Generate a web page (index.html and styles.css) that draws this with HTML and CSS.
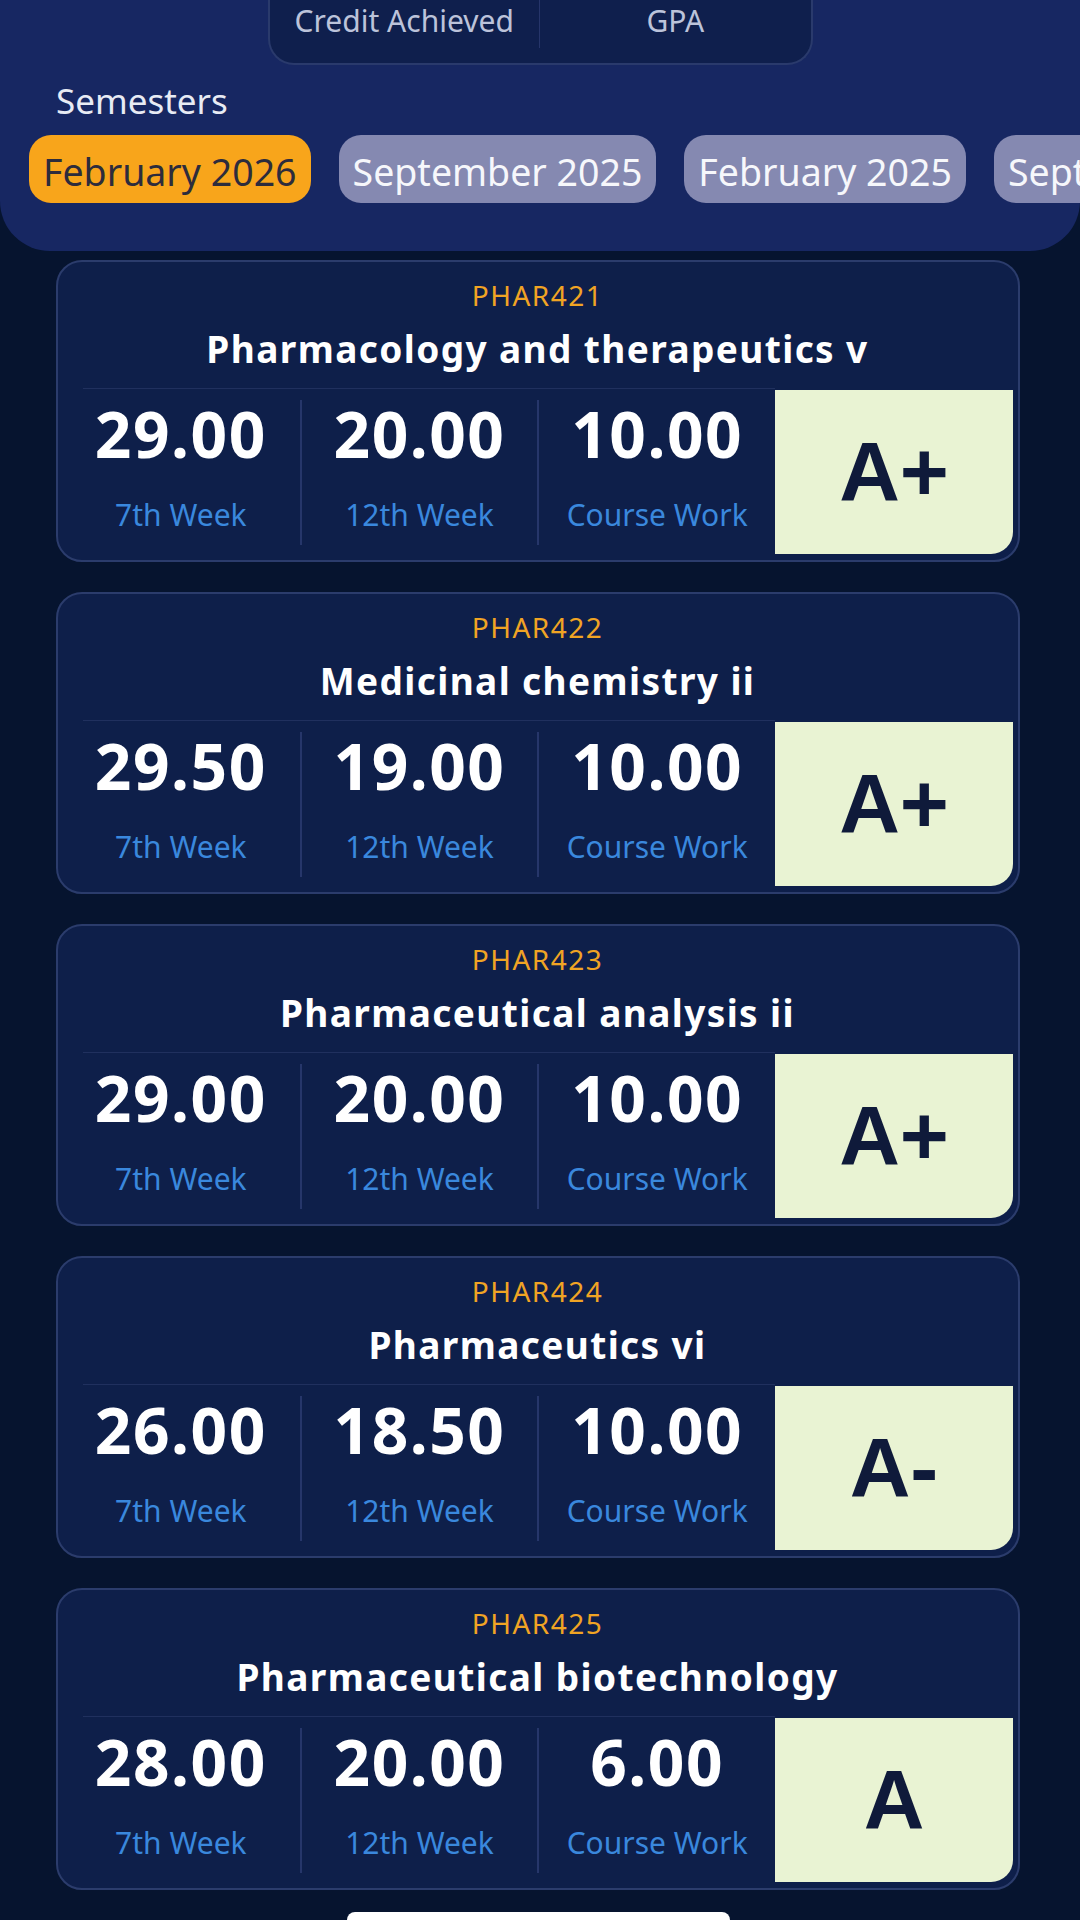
FILE: index.html
```html
<!DOCTYPE html>
<html lang="en">
<head>
    <meta charset="UTF-8">
    <meta name="viewport" content="width=device-width, initial-scale=1.0">
    <title>Grades</title>
    <link rel="stylesheet" href="styles.css">
</head>
<body>
    <!-- Summary + Semester Picker -->
    <header class="top-panel">
        <div class="summary">
            <div class="summary-cell">Credit Achieved</div>
            <div class="summary-cell">GPA</div>
        </div>

        <div class="semesters-label">Semesters</div>

        <div class="chips">
            <div class="chip active">February 2026</div>
            <div class="chip">September 2025</div>
            <div class="chip">February 2025</div>
            <div class="chip">September 2024</div>
        </div>
    </header>

    <!-- Course Cards -->
    <main class="courses">
        <div class="card">
            <div class="card-code">PHAR421</div>
            <div class="card-title">Pharmacology and therapeutics v</div>
            <div class="card-body">
                <div class="marks">
                    <div class="mark"><span class="mark-value">29.00</span><span class="mark-label">7th Week</span></div>
                    <div class="mark"><span class="mark-value">20.00</span><span class="mark-label">12th Week</span></div>
                    <div class="mark"><span class="mark-value">10.00</span><span class="mark-label">Course Work</span></div>
                </div>
                <div class="grade">A+</div>
            </div>
        </div>

        <div class="card">
            <div class="card-code">PHAR422</div>
            <div class="card-title">Medicinal chemistry ii</div>
            <div class="card-body">
                <div class="marks">
                    <div class="mark"><span class="mark-value">29.50</span><span class="mark-label">7th Week</span></div>
                    <div class="mark"><span class="mark-value">19.00</span><span class="mark-label">12th Week</span></div>
                    <div class="mark"><span class="mark-value">10.00</span><span class="mark-label">Course Work</span></div>
                </div>
                <div class="grade">A+</div>
            </div>
        </div>

        <div class="card">
            <div class="card-code">PHAR423</div>
            <div class="card-title">Pharmaceutical analysis ii</div>
            <div class="card-body">
                <div class="marks">
                    <div class="mark"><span class="mark-value">29.00</span><span class="mark-label">7th Week</span></div>
                    <div class="mark"><span class="mark-value">20.00</span><span class="mark-label">12th Week</span></div>
                    <div class="mark"><span class="mark-value">10.00</span><span class="mark-label">Course Work</span></div>
                </div>
                <div class="grade">A+</div>
            </div>
        </div>

        <div class="card">
            <div class="card-code">PHAR424</div>
            <div class="card-title">Pharmaceutics vi</div>
            <div class="card-body">
                <div class="marks">
                    <div class="mark"><span class="mark-value">26.00</span><span class="mark-label">7th Week</span></div>
                    <div class="mark"><span class="mark-value">18.50</span><span class="mark-label">12th Week</span></div>
                    <div class="mark"><span class="mark-value">10.00</span><span class="mark-label">Course Work</span></div>
                </div>
                <div class="grade">A-</div>
            </div>
        </div>

        <div class="card">
            <div class="card-code">PHAR425</div>
            <div class="card-title">Pharmaceutical biotechnology</div>
            <div class="card-body">
                <div class="marks">
                    <div class="mark"><span class="mark-value">28.00</span><span class="mark-label">7th Week</span></div>
                    <div class="mark"><span class="mark-value">20.00</span><span class="mark-label">12th Week</span></div>
                    <div class="mark"><span class="mark-value">6.00</span><span class="mark-label">Course Work</span></div>
                </div>
                <div class="grade">A</div>
            </div>
        </div>
    </main>

    <!-- Home Indicator -->
    <div class="home-bar"></div>
</body>
</html>
```

FILE: styles.css
```css
/* Universal Settings */
body {
    margin: 0;
    width: 1080px;
    height: 1920px;
    overflow: hidden;
    background: #06142f;
    color: #ffffff;
    font-family: 'Noto Sans', 'Open Sans', sans-serif;
}

/* Top Panel */
.top-panel {
    background: #172762;
    border-radius: 0 0 50px 50px;
    padding-bottom: 48px;
}

/* Summary Box */
.summary {
    width: 545px;
    margin: 0 auto;
    display: grid;
    grid-template-columns: 1fr 1fr;
    background: #0f1f4d;
    border: 2px solid #2a3a6c;
    border-top: none;
    border-radius: 0 0 26px 26px;
    padding-bottom: 15px;
    box-sizing: border-box;
}

.summary-cell {
    height: 48px;
    line-height: 42px;
    font-size: 30px;
    color: #bcc3da;
    text-align: center;
}

.summary-cell:first-child {
    border-right: 1px solid #26356a;
}

/* Semester Label */
.semesters-label {
    margin-top: 16px;
    padding-left: 56px;
    font-size: 35px;
    line-height: 40px;
    color: #e8ebf4;
}

/* Semester Chips */
.chips {
    display: flex;
    gap: 28px;
    margin-top: 14px;
    padding-left: 29px;
    overflow: hidden;
    white-space: nowrap;
}

.chip {
    flex-shrink: 0;
    height: 68px;
    line-height: 74px;
    padding: 0 14px;
    border-radius: 22px;
    font-size: 37.5px;
    background: #8589b1;
    color: #f6f7fb;
    box-sizing: border-box;
}

.chip.active {
    background: #f8a51b;
    color: #2d2c3c;
}

/* Course List */
.courses {
    display: flex;
    flex-direction: column;
    gap: 30px;
    margin-top: 9px;
    padding-left: 56px;
}

/* Card Styling */
.card {
    width: 964px;
    height: 302px;
    box-sizing: border-box;
    display: flex;
    flex-direction: column;
    background: #0e1f4a;
    border: 2px solid #2b3c6c;
    border-radius: 26px;
    padding: 15px 5px 6px 4px;
}

.card-code {
    font-size: 28px;
    line-height: 36px;
    letter-spacing: 1.5px;
    color: #f0a424;
    text-align: center;
}

.card-title {
    margin-top: 14px;
    font-size: 37px;
    line-height: 44px;
    font-weight: 700;
    letter-spacing: 1.4px;
    text-align: center;
}

.card-body {
    flex: 1;
    margin-top: 17px;
    display: grid;
    grid-template-columns: 1fr 238px;
}

/* Marks Row */
.marks {
    display: grid;
    grid-template-columns: repeat(3, 1fr);
    padding: 12px 0 9px;
    background: linear-gradient(#20305e, #20305e) no-repeat 21px 0 / calc(100% - 21px) 1px;
}

.mark {
    display: flex;
    flex-direction: column;
    align-items: center;
    padding-top: 2px;
}

.mark + .mark {
    border-left: 2px solid #26366a;
}

.mark-value {
    font-size: 64px;
    line-height: 64px;
    font-weight: 700;
    letter-spacing: 1.5px;
}

.mark-label {
    margin-top: 31px;
    font-size: 30px;
    line-height: 36px;
    color: #3a88dd;
}

/* Grade Box */
.grade {
    margin-top: 2px;
    display: flex;
    align-items: center;
    justify-content: center;
    background: #e9f3d3;
    border-bottom-right-radius: 22px;
    color: #0f1a3a;
    font-family: 'Liberation Sans', Arial, sans-serif;
    font-size: 84px;
    font-weight: 700;
}

/* Home Indicator */
.home-bar {
    position: fixed;
    left: 347px;
    bottom: -8px;
    width: 383px;
    height: 16px;
    background: #ffffff;
    border-radius: 8px;
}
```
